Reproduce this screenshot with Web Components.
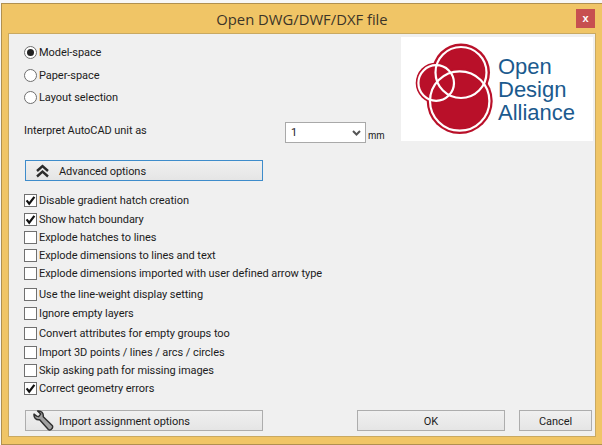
<!DOCTYPE html>
<html lang="en">
<head>
<meta charset="UTF-8">
<title>Open DWG/DWF/DXF file</title>
<style>
html, body { margin: 0; padding: 0; background: #f7f7f7; }
body { width: 602px; height: 445px; overflow: hidden; font: 11px Roboto, sans-serif; letter-spacing: -.06px; color: #1c1c1c; }
</style>
</head>
<body>
<dialog-window heading="Open DWG/DWF/DXF file">
  <div style="display:grid;grid-template-columns:1fr 192px;align-items:start;padding-right:2px">
    <div style="display:flex;flex-direction:column;padding:11px 0 0 15px">
      <radio-row checked>Model-space</radio-row>
      <radio-row style="margin-top:8px">Paper-space</radio-row>
      <radio-row style="margin-top:7px">Layout selection</radio-row>
      <div style="display:flex;align-items:flex-start;margin-top:17px">
        <span style="width:261px;line-height:16px;margin-top:1px">Interpret AutoCAD unit as</span>
        <combo-box>1</combo-box>
        <span style="font:10px/13px 'Liberation Sans',sans-serif;margin:7px 0 0 2px">mm</span>
      </div>
    </div>
    <oda-logo></oda-logo>
  </div>
  <div style="display:flex;flex-direction:column;padding:17px 0 0 16px">
    <push-button focus style="width:238px" icon="chevrons">Advanced options</push-button>
    <div style="display:flex;flex-direction:column;margin-top:13px">
      <check-row checked>Disable gradient hatch creation</check-row>
      <check-row checked style="margin-top:6px">Show hatch boundary</check-row>
      <check-row style="margin-top:5px">Explode hatches to lines</check-row>
      <check-row style="margin-top:5px">Explode dimensions to lines and text</check-row>
      <check-row style="margin-top:5px">Explode dimensions imported with user defined arrow type</check-row>
      <check-row style="margin-top:8px">Use the line-weight display setting</check-row>
      <check-row style="margin-top:6px">Ignore empty layers</check-row>
      <check-row style="margin-top:7px">Convert attributes for empty groups too</check-row>
      <check-row style="margin-top:6px">Import 3D points / lines / arcs / circles</check-row>
      <check-row style="margin-top:5px">Skip asking path for missing images</check-row>
      <check-row checked style="margin-top:5px">Correct geometry errors</check-row>
    </div>
    <div style="display:flex;margin-top:15px">
      <push-button style="width:238px" icon="wrench">Import assignment options</push-button>
      <push-button center style="width:148px;margin-left:94px">OK</push-button>
      <push-button center style="width:73px;margin-left:14px">Cancel</push-button>
    </div>
  </div>
</dialog-window>

<script>
class DialogWindow extends HTMLElement {
  constructor() {
    super();
    this.attachShadow({ mode: "open" }).innerHTML = `
      <style>
        :host { display: block; box-sizing: border-box; margin: 3px 0 0 1px; width: 601px; height: 442px;
          border: 1px solid #b09050; border-right: 0; background: #f0c566; padding: 0 6px 6px 6px; letter-spacing: 0; }
        header { display: flex; justify-content: center; align-items: center; position: relative; height: 29px;
          font: 14.8px "Open Sans", sans-serif; color: #3c3428; }
        button { position: absolute; right: 1px; top: 5px; width: 19px; height: 19px; border: 0; padding: 0;
          background: #c75050; color: #fff; font: bold 11px/17px "Liberation Sans", sans-serif; }
        main { box-sizing: border-box; height: 404px; width: 588px; background: #f0f0f0;
          border: 1px solid #c9a961; letter-spacing: -.06px; }
      </style>
      <header><span></span><button>x</button></header>
      <main><slot></slot></main>`;
    this.shadowRoot.querySelector("span").textContent = this.getAttribute("heading");
  }
}

class RadioRow extends HTMLElement {
  constructor() {
    super();
    const dot = this.hasAttribute("checked") ? '<circle cx="6.5" cy="6.5" r="3.5" fill="#222"/>' : "";
    this.attachShadow({ mode: "open" }).innerHTML = `
      <style>
        :host { display: flex; align-items: center; height: 15px; gap: 2px; }
        svg { width: 13px; height: 13px; flex: none; }
      </style>
      <svg viewBox="0 0 13 13"><circle cx="6.5" cy="6.5" r="6" fill="#fff" stroke="#6e6e6e"/>${dot}</svg>
      <slot></slot>`;
  }
}

class CheckRow extends HTMLElement {
  constructor() {
    super();
    const tick = this.hasAttribute("checked")
      ? '<path d="M2.6 6.4 5.2 9.6 10.4 2.8" fill="none" stroke="#111" stroke-width="2.2"/>' : "";
    this.attachShadow({ mode: "open" }).innerHTML = `
      <style>
        :host { display: flex; align-items: center; height: 13px; gap: 2px; margin-left: -1px; white-space: nowrap; }
        svg { width: 13px; height: 13px; flex: none; }
      </style>
      <svg viewBox="0 0 13 13"><rect x=".5" y=".5" width="12" height="12" fill="#fff" stroke="#707070"/>${tick}</svg>
      <slot></slot>`;
  }
}

const ICONS = {
  chevrons: `<svg width="15" height="14" viewBox="0 0 15 14" fill="none" stroke="#2b2b2b" stroke-width="2.4">
      <path d="M2 7 7.5 2 13 7M2 12.5 7.5 7.5 13 12.5"/></svg>`,
  wrench: `<svg width="23" height="21" viewBox="1.5 .5 20.500 20.500" style="margin-left:2px">
      <path d="M2.5 4.5C2 8 4.5 10.5 8 10l8.500 9.500c1.500 1.300 5-.7 4-3.700L11.500 7C12 3.500 9.500 1 6 1.500L9 4.500 7 7 5 6.500Z"
        fill="#a0a0a0" stroke="#2e2e2e" stroke-width="1.400" stroke-linejoin="round"/></svg>`
};

class PushButton extends HTMLElement {
  constructor() {
    super();
    const icon = ICONS[this.getAttribute("icon")] || "";
    this.attachShadow({ mode: "open" }).innerHTML = `
      <style>
        :host { display: flex; align-items: center; box-sizing: border-box; height: 21px; flex: none;
          border: 1px solid #adadad; background: linear-gradient(#f0f0f0, #e5e5e5); }
        :host([focus]) { border-color: #3e8ccb; }
        :host([center]) { justify-content: center; }
        .icon { width: 33px; display: flex; justify-content: center; flex: none; }
        .icon svg { flex: none; }
        .label { padding-top: 2px; }
      </style>
      ${icon ? `<span class="icon">${icon}</span>` : ""}
      <span class="label"><slot></slot></span>`;
  }
}

class ComboBox extends HTMLElement {
  constructor() {
    super();
    this.attachShadow({ mode: "open" }).innerHTML = `
      <style>
        :host { display: flex; align-items: center; justify-content: space-between; box-sizing: border-box;
          width: 81px; height: 21px; background: #fff; border: 1px solid #a9a9a9; padding: 0 3px 0 5px; flex: none; }
      </style>
      <slot></slot>
      <svg width="11" height="8" viewBox="0 0 11 8"><path d="M2 2 5.500 5.500 9 2" fill="none" stroke="#555" stroke-width="2"/></svg>`;
  }
}

class OdaLogo extends HTMLElement {
  constructor() {
    super();
    this.attachShadow({ mode: "open" }).innerHTML = `
      <style>
        :host { display: flex; align-items: center; width: 192px; height: 104px; margin-top: 3px; background: #fff; letter-spacing: 0; }
        svg { width: 97px; height: 104px; flex: none; }
        div { font: 22px/23px "Liberation Sans", sans-serif; color: #1b5a8e; margin-top: 1px; }
      </style>
      <svg viewBox="0 0 97 104">
        <g fill="#b91029">
          <circle cx="60" cy="35.500" r="29"/>
          <circle cx="58.700" cy="64" r="33"/>
          <circle cx="35.200" cy="46" r="20.500"/>
        </g>
        <g fill="none" stroke="#fff" stroke-width="2.200">
          <circle cx="60" cy="35.500" r="25.500"/>
          <circle cx="58.700" cy="64" r="29.700"/>
          <circle cx="35.200" cy="46" r="17.800"/>
        </g>
      </svg>
      <div>Open<br>Design<br>Alliance</div>`;
  }
}

customElements.define("dialog-window", DialogWindow);
customElements.define("radio-row", RadioRow);
customElements.define("check-row", CheckRow);
customElements.define("push-button", PushButton);
customElements.define("combo-box", ComboBox);
customElements.define("oda-logo", OdaLogo);
</script>
</body>
</html>
